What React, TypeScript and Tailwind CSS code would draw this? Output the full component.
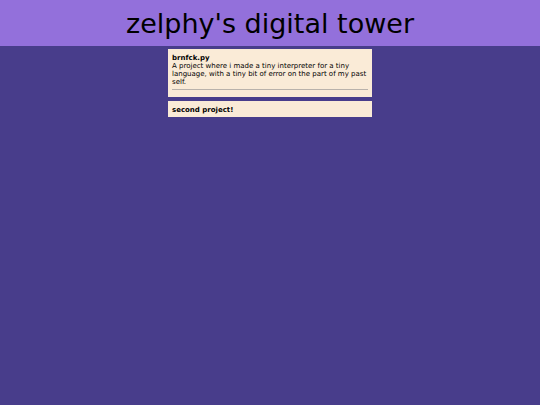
const projects = [
  {
    name: "brnfck.py",
    description:
      "A project where i made a tiny interpreter for a tiny language, with a tiny bit of error on the part of my past self.",
  },
  { name: "second project!", description: "" },
];

export default function App() {
  return (
    <div className="min-h-screen bg-[#483d8b] font-['DejaVu_Sans',sans-serif] text-black">
      <header className="bg-[#9370db] px-4 pt-[9px] pb-[7px] text-center">
        <h1 className="text-[27px] leading-[30px]">zelphy's digital tower</h1>
      </header>
      <main className="mx-auto flex max-w-[204px] flex-col gap-1 pt-[3px]">
        {projects.map((project) => (
          <article
            key={project.name}
            className="bg-[#faebd7] px-1 pt-[5px] pb-[3px] text-[7px] leading-[8px]"
          >
            <h2 className="font-bold">{project.name}</h2>
            {project.description && (
              <>
                <p>{project.description}</p>
                <hr className="mt-[3px] mb-1 border-[#b9b2ab]" />
              </>
            )}
          </article>
        ))}
      </main>
    </div>
  );
}
